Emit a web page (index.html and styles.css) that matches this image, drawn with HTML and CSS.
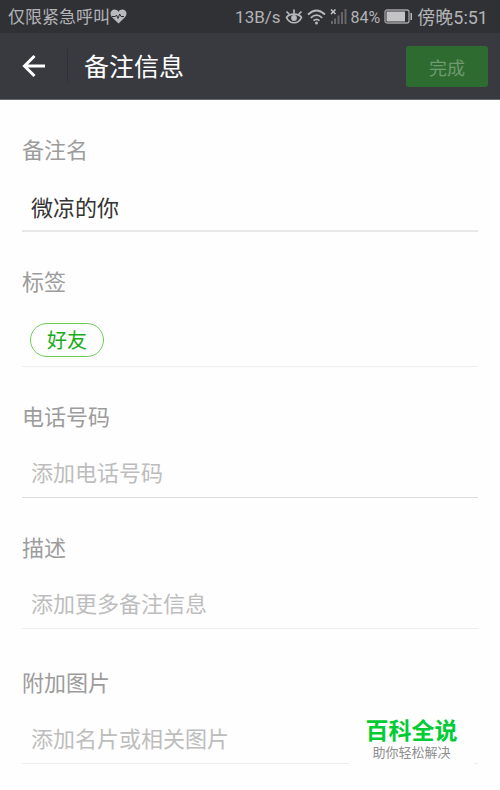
FILE: index.html
```html
<!DOCTYPE html>
<html lang="zh-CN">
	<head>
		<meta charset="UTF-8" />
		<meta name="viewport" content="width=device-width, initial-scale=1.0" />
		<title>备注信息</title>
		<link rel="stylesheet" href="styles.css">
	</head>
	<body>
		<div class="status-bar">
			<span>仅限紧急呼叫</span>
			<svg width="17" height="15" viewBox="0 0 17 15">
				<path d="M8.500 14.500 1.800 8C-1 4.500 1 .5 4.600 .5c1.700 0 3 .8 3.900 2.200C9.400 1.300 10.700 .5 12.400 .5 16 .5 18 4.500 15.200 8z" fill="#b9b9bb" />
				<path d="M2 7.500h3.500l1-1.500 1.500 3.500 1.700-4.500 1.300 2.500h3" fill="none" stroke="#303135" stroke-width="1" />
			</svg>
			<div class="status-right">
				<span>13B/s</span>
				<svg width="18" height="17" viewBox="0 0 18 17" fill="none" stroke="#b9b9bb">
					<path d="M1.500 9.500C4.500 5 13.500 5 16.500 9.500 13.500 16.500 4.500 16.500 1.500 9.500z" stroke-width="1.700" />
					<path d="M9 5.500V1.500M4.500 6.500 1.500 3.500M13.500 6.500 16.500 3.500" stroke-width="1.700" />
					<circle cx="9" cy="10" r="2.900" fill="#b9b9bb" stroke="none" />
				</svg>
				<svg width="19" height="16" viewBox="0 0 19 16" fill="none" stroke="#b9b9bb" stroke-width="1.800">
					<path d="M1 5.500Q9.500-2.500 18 5.500M3.800 8.800Q9.500 3.500 15.200 8.800M6.500 11.700Q9.500 9 12.500 11.700" />
					<circle cx="9.500" cy="14" r="1.500" fill="#b9b9bb" stroke="none" />
				</svg>
				<svg width="17" height="17" viewBox="0 0 17 17">
					<path d="M1 1.500l4.500 4.500M5.500 1.500 1 6" stroke="#c4c4c6" stroke-width="1.600" />
					<path d="M1 13h2v3H1zM4 10.500h2v5.500H4zM7.500 7.500h2V16h-2zM11 4h2v12h-2zM14.500 1h2v15h-2z" fill="#66676b" />
				</svg>
				<span class="battery">84%</span>
				<svg width="29" height="15" viewBox="0 0 29 15">
					<rect x="1" y="1" width="24" height="13" rx="2" fill="none" stroke="#a3a3a5" stroke-width="1.300" />
					<path d="M2.500 2.500h18.500v10h-18.500z" fill="#c4c4c6" />
					<path d="M26.500 4h1.500v7h-1.500z" fill="#b9b9bb" />
				</svg>
				<span class="time">傍晚5:51</span>
			</div>
		</div>

		<header class="title-bar">
			<button type="button" class="back" aria-label="返回">
				<svg width="24" height="24" viewBox="0 0 24 24" fill="none" stroke="#fff" stroke-width="3">
					<path d="M23 12H3M12.500 2 2.500 12l10 10" />
				</svg>
			</button>
			<h1>备注信息</h1>
			<button type="submit" form="remark-form" class="done" disabled>完成</button>
		</header>

		<form id="remark-form">
			<div class="field strong">
				<label for="remark">备注名</label>
				<input type="text" id="remark" name="remark" value="微凉的你" />
			</div>
			<div class="field">
				<h2>标签</h2>
				<div class="tags">
					<button type="button" class="tag">好友</button>
				</div>
			</div>
			<div class="field phone">
				<label for="phone">电话号码</label>
				<input type="tel" id="phone" name="phone" placeholder="添加电话号码" />
			</div>
			<div class="field">
				<label for="description">描述</label>
				<input type="text" id="description" name="description" placeholder="添加更多备注信息" />
			</div>
			<div class="field picture">
				<label for="picture">附加图片</label>
				<input type="text" id="picture" name="picture" placeholder="添加名片或相关图片" />
			</div>
		</form>

		<div class="watermark">
			<strong>百科全说</strong>
			<span>助你轻松解决</span>
		</div>
	</body>
</html>
```

FILE: styles.css
```css
* {
	box-sizing: border-box;
}
body {
	position: relative;
	min-height: 100vh;
	margin: 0;
	background-color: #fefefe;
	font-family: Roboto, "Noto Sans CJK SC", sans-serif;
}
button,
input {
	font-family: inherit;
}
svg {
	display: block;
	flex: none;
}

/* phone status bar */
.status-bar {
	display: flex;
	align-items: center;
	height: 33px;
	padding: 0 12px 0 8px;
	background-color: #303135;
	color: #b3b3b5;
	font-size: 17px;
	line-height: 33px;
	white-space: nowrap;
}
.status-bar span {
	padding-top: 2px;
}
.status-right {
	display: flex;
	align-items: center;
	gap: 4px;
	margin-left: auto;
}
.status-right .battery {
	font-size: 16px;
}
.status-right .time {
	font-size: 18px;
}

/* title bar */
.title-bar {
	display: flex;
	align-items: center;
	height: 67px;
	padding-right: 12px;
	border-bottom: 1px solid #68696c;
	background-color: #393a3f;
}
.back {
	display: flex;
	align-items: center;
	justify-content: center;
	width: 68px;
	height: 34px;
	padding: 0;
	border: 0;
	border-right: 1px solid #303135;
	background: none;
}
h1 {
	flex: 1;
	margin: 0;
	padding: 4px 0 0 16px;
	color: #fff;
	font-size: 25px;
	font-weight: 400;
	line-height: 34px;
}
.done {
	width: 82px;
	height: 41px;
	padding: 2px 0 0;
	border: 0;
	border-radius: 3px;
	background-color: #2e6b31;
	color: #6f9a70;
	font-size: 18px;
}

/* form */
form {
	padding: 0 22px;
}
.field {
	padding-top: 36px;
	border-bottom: 1px solid #eee;
}
.strong {
	border-bottom: 2px solid #e8e8e8;
}
.phone {
	border-bottom-color: #ddd;
}
.picture {
	padding-top: 40px;
}
label,
h2 {
	display: block;
	margin: 0 0 16px;
	color: #9c9c9c;
	font-size: 22px;
	font-weight: 400;
	line-height: 30px;
}
input {
	display: block;
	width: 100%;
	height: 48px;
	padding: 0 9px;
	border: 0;
	outline: 0;
	background: none;
	color: #333;
	font-size: 22px;
}
input::placeholder {
	color: #bdbdbd;
}
.tags {
	display: flex;
	align-items: center;
	height: 52px;
	padding: 0 8px;
}
.tag {
	height: 34px;
	padding: 1px 16px 0;
	border: 1px solid #6fce5a;
	border-radius: 17px;
	background: none;
	color: #1aad19;
	font-size: 20px;
	line-height: 32px;
}

/* watermark over the bottom right corner */
.watermark {
	position: absolute;
	right: 26px;
	bottom: 18px;
	display: flex;
	flex-direction: column;
	align-items: center;
	width: 125px;
	padding: 10px 0;
	background-color: #fefefe;
}
.watermark strong {
	color: #0c3;
	font-size: 23px;
	line-height: 24px;
}
.watermark span {
	color: #8e8e8e;
	font-size: 13px;
	line-height: 18px;
}
```
